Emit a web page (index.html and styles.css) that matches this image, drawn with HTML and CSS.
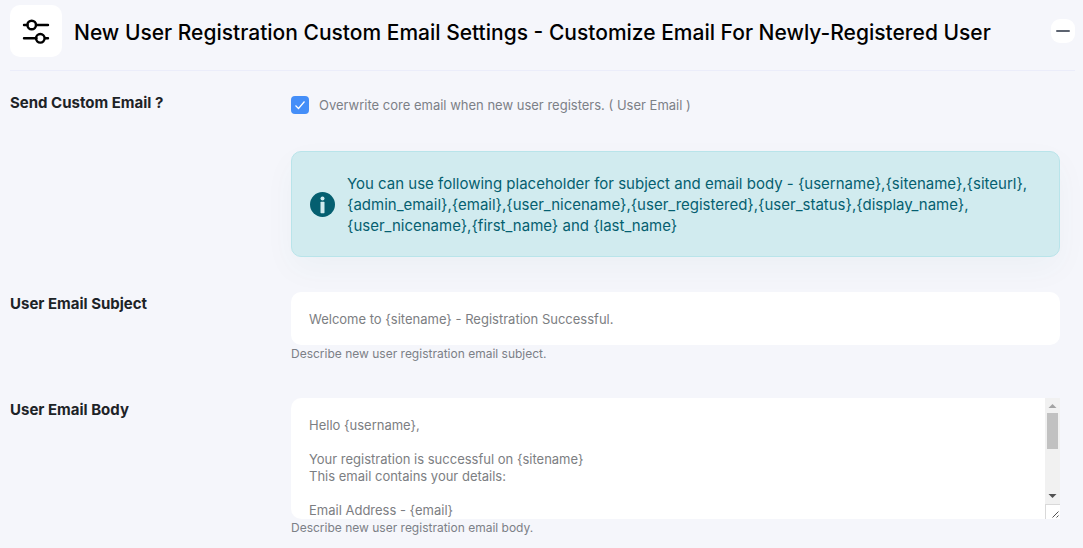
FILE: index.html
```html
<!DOCTYPE html>
<html lang="en">
<head>
<meta charset="utf-8">
<meta name="viewport" content="width=device-width, initial-scale=1">
<title>Custom Email Settings</title>
<link rel="stylesheet" href="styles.css">
</head>
<body>
<main class="panel">
  <header class="panel-header">
    <span class="panel-icon">
      <svg width="28" height="28" viewBox="0 0 28 28" fill="none" stroke="#000" stroke-width="2.4" stroke-linecap="round" aria-hidden="true">
        <path d="M2 8h3.500M14 8h12M2 21.300h12.500M23 21.300h3"/>
        <circle cx="9.700" cy="8" r="4.300"/>
        <circle cx="18.300" cy="21.300" r="4.300"/>
      </svg>
    </span>
    <h1 class="panel-title">New User Registration Custom Email Settings - Customize Email For Newly-Registered User</h1>
    <button class="toggle" type="button" aria-label="Collapse section">
      <svg width="14" height="2" viewBox="0 0 14 2" aria-hidden="true"><rect width="14" height="2" rx="1" fill="#5c6370"/></svg>
    </button>
  </header>
  <form class="settings">
    <div class="row">
      <label class="row-label" for="send">Send Custom Email ?</label>
      <div class="field">
        <div class="check-line">
          <input class="check" type="checkbox" id="send" checked>
          <label class="check-text" for="send">Overwrite core email when new user registers. ( User Email )</label>
        </div>
        <div class="notice">
          <svg class="notice-icon" width="25" height="25" viewBox="0 0 25 25" aria-hidden="true">
            <circle cx="12.500" cy="12.500" r="12.500" fill="#055f70"/>
            <circle cx="12.500" cy="6.400" r="2" fill="#d1ebef"/>
            <rect x="10.500" y="9.800" width="4" height="11.400" rx=".6" fill="#d1ebef"/>
          </svg>
          <p class="notice-text">You can use following placeholder for subject and email body - {username},{sitename},{siteurl},<br>{admin_email},{email},{user_nicename},{user_registered},{user_status},{display_name},<br>{user_nicename},{first_name} and {last_name}</p>
        </div>
      </div>
    </div>
    <div class="row">
      <label class="row-label" for="subject">User Email Subject</label>
      <div class="field">
        <input class="control" type="text" id="subject" value="Welcome to {sitename} - Registration Successful.">
        <p class="hint">Describe new user registration email subject.</p>
      </div>
    </div>
    <div class="row">
      <label class="row-label" for="body">User Email Body</label>
      <div class="field">
        <div class="area-wrap">
          <textarea class="control control-area" id="body">Hello {username},

Your registration is successful on {sitename}
This email contains your details:

Email Address - {email}
Username - {username}
Display Name - {display_name}
First Name - {first_name}
Last Name - {last_name}

Thank you for registering.

Regards,
{sitename}
{siteurl}</textarea>
          <div class="scrollbar" aria-hidden="true">
            <svg width="15" height="15" viewBox="0 0 15 15"><path d="M3.500 10l4-4 4 4z" fill="#a3a3a3"/></svg>
            <div class="scroll-track"><div class="scroll-thumb"></div></div>
            <svg width="15" height="15" viewBox="0 0 15 15"><path d="M3.500 5l4 4 4-4z" fill="#505050"/></svg>
          </div>
        </div>
        <p class="hint">Describe new user registration email body.</p>
      </div>
    </div>
  </form>
</main>
</body>
</html>
```
FILE: styles.css
```css
* { box-sizing: border-box; }

body {
  margin: 0;
  background: #f5f6fb;
  color: #1d2327;
  font-family: Inter, "Liberation Sans", sans-serif;
}

.panel { padding: 5px 8px 10px 10px; }

.panel-header {
  display: flex;
  align-items: center;
  gap: 12px;
  padding-bottom: 13px;
  border-bottom: 1px solid #ebedfa;
}

.panel-icon {
  display: flex;
  align-items: center;
  justify-content: center;
  flex: none;
  width: 52px;
  height: 52px;
  border-radius: 10px;
  background: #fff;
}

.panel-title {
  flex: 1;
  margin: 0;
  padding-top: 3px;
  color: #000;
  font-size: 21px;
  line-height: 28px;
  font-weight: 500;
}

.toggle {
  display: flex;
  align-items: center;
  justify-content: center;
  flex: none;
  width: 24px;
  height: 24px;
  padding: 0;
  border: 0;
  border-radius: 9px;
  background: #fff;
}

.settings {
  display: flex;
  flex-direction: column;
  gap: 35px;
  padding: 20px 15px 0 0;
}

.row { display: flex; }

.row-label {
  flex: none;
  width: 281px;
  font-size: 15px;
  line-height: 24px;
  font-weight: 700;
}

.field { flex: 1; min-width: 0; }

.check-line {
  display: flex;
  align-items: center;
  gap: 10px;
  margin-bottom: 34px;
  padding-top: 2px;
}

.check {
  appearance: none;
  width: 18px;
  height: 18px;
  margin: 0;
  border-radius: 4px;
  background: #448ef8 url("data:image/svg+xml,%3Csvg xmlns='http://www.w3.org/2000/svg' viewBox='0 0 18 18'%3E%3Cpath d='M4.500 9.500l3 3 6-7' fill='none' stroke='white' stroke-width='1.200'/%3E%3C/svg%3E") center / 18px 18px;
}

.check:not(:checked) { background: #fff; }

.check-text {
  color: #7c8087;
  font-size: 13px;
  line-height: 24px;
}

.notice {
  display: flex;
  align-items: center;
  gap: 12px;
  padding: 21px 18px 20px;
  border: 1px solid #b9e4ea;
  border-radius: 10px;
  background: #d1ebef;
  box-shadow: 0 12px 32px rgba(5, 95, 112, 0.04);
}

.notice-icon { flex: none; }

.notice-text {
  margin: 0;
  color: #055f70;
  font-size: 15px;
  line-height: 21px;
}

.control {
  position: relative;
  display: block;
  width: 100%;
  height: 53px;
  padding: 0 18px;
  border: 0;
  border-radius: 10px;
  outline: 0;
  background: #fff;
  color: #7c7e82;
  font-family: inherit;
  font-size: 13px;
  line-height: 17px;
}

.area-wrap { position: relative; }

.control-area {
  height: 121px;
  padding: 19px 33px 19px 18px;
  border-radius: 10px 0 0 10px;
  resize: vertical;
  scrollbar-width: none;
}

.control-area::-webkit-resizer {
  border: solid #d9d9d9;
  border-width: 1px 0 0 1px;
  background: url("data:image/svg+xml,%3Csvg xmlns='http://www.w3.org/2000/svg' viewBox='0 0 15 15'%3E%3Cpath d='M7 13l6-6M11 13l2-2' stroke='%23505050'/%3E%3C/svg%3E") center / 15px 15px no-repeat;
}

.scrollbar {
  position: absolute;
  top: 0;
  right: 0;
  bottom: 15px;
  display: flex;
  flex-direction: column;
  width: 15px;
  background: #f1f1f1;
  pointer-events: none;
}

.scroll-track {
  flex: 1;
  padding: 0 2px;
}

.scroll-thumb {
  height: 48%;
  background: #c1c1c1;
}

.hint {
  margin: 0;
  color: #7c8087;
  font-size: 12px;
  line-height: 18px;
}
```
